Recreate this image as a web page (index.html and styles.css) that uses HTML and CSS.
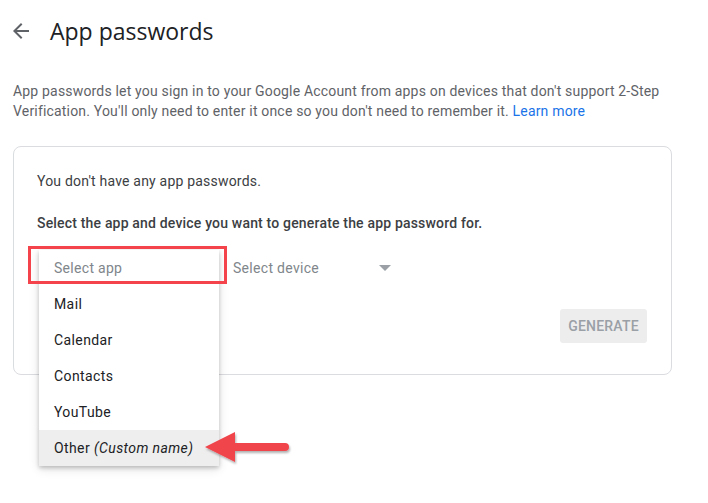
FILE: index.html
```html
<!DOCTYPE html>
<html lang="en">
<head>
<meta charset="utf-8">
<title>App passwords</title>
<link rel="stylesheet" href="styles.css">
</head>
<body>
<div class="page">
  <header class="header">
    <svg class="back" width="24" height="24" viewBox="0 0 24 24" aria-hidden="true">
      <path d="M20 11H7.83l5.59-5.59L12 4l-8 8 8 8 1.41-1.41L7.83 13H20v-2z" fill="#5f6368"/>
    </svg>
    <h1 class="title">App passwords</h1>
  </header>
  <p class="intro">App passwords let you sign in to your Google Account from apps on devices that don't support 2-Step Verification. You'll only need to enter it once so you don't need to remember it. <a class="link" href="#">Learn more</a></p>
  <section class="card">
    <p class="empty">You don't have any app passwords.</p>
    <p class="prompt">Select the app and device you want to generate the app password for.</p>
    <div class="selects">
      <div class="app-select">
        <div class="field"></div>
        <ul class="menu">
          <li class="item placeholder">Select app</li>
          <li class="item">Mail</li>
          <li class="item">Calendar</li>
          <li class="item">Contacts</li>
          <li class="item">YouTube</li>
          <li class="item hover">Other <em>(Custom name)</em></li>
        </ul>
        <div class="highlight"></div>
        <svg class="arrow" width="92" height="36" viewBox="0 0 92 36" aria-hidden="true">
          <defs>
            <filter id="sh" x="-10%" y="-30%" width="130%" height="170%">
              <feDropShadow dx="1" dy="2" stdDeviation="1.2" flood-color="#000" flood-opacity="0.3"/>
            </filter>
          </defs>
          <g filter="url(#sh)" fill="#f0444b">
            <path d="M2 16 L32 1 L32 12 L82 12 Q86 12 86 16 Q86 20 82 20 L32 20 L32 31 Z"/>
          </g>
        </svg>
      </div>
      <div class="device-select">
        <span class="placeholder">Select device</span>
        <span class="caret"></span>
      </div>
    </div>
    <div class="actions">
      <button class="generate" type="button">GENERATE</button>
    </div>
  </section>
</div>
</body>
</html>
```

FILE: styles.css
```css
* { box-sizing: border-box; }

html, body {
  margin: 0;
  padding: 0;
  background: #ffffff;
}

body {
  font-family: Roboto, "Liberation Sans", Arial, sans-serif;
  color: #202124;
  width: 708px;
  height: 503px;
  overflow: hidden;
}

.page {
  padding: 0 30px 0 13px;
}

.header {
  display: flex;
  align-items: center;
  height: 62px;
}

.back {
  margin-left: -4px;
  display: block;
}

.title {
  margin: 0 0 0 17px;
  font-family: "Open Sans", Roboto, sans-serif;
  font-size: 23px;
  font-weight: 400;
  color: #202124;
}

.intro {
  margin: 19px 0 0;
  font-size: 14px;
  line-height: 20px;
  color: #5f6368;
  letter-spacing: 0.18px;
}

.link {
  color: #1a73e8;
  text-decoration: none;
}

.card {
  margin-top: 25px;
  width: 659px;
  height: 229px;
  border: 1px solid #dadce0;
  border-radius: 8px;
  padding: 24px 24px 0 23px;
}

.empty {
  margin: 0;
  font-size: 14px;
  line-height: 20px;
  color: #3c4043;
  letter-spacing: 0.2px;
}

.prompt {
  margin: 22px 0 0;
  font-size: 14px;
  line-height: 20px;
  font-weight: 500;
  color: #3c4043;
  letter-spacing: 0.18px;
}

.selects {
  display: flex;
  align-items: center;
  margin-top: 17px;
  height: 36px;
}

.app-select {
  position: relative;
  width: 180px;
  height: 36px;
  margin-left: 2px;
}

.field {
  height: 36px;
}

.placeholder {
  color: #80868b;
  font-weight: 400;
}

.menu {
  position: absolute;
  top: 0;
  left: 0;
  width: 180px;
  margin: 0;
  padding: 0;
  list-style: none;
  background: #ffffff;
  box-shadow: 0 2px 4px rgba(0,0,0,0.2), 0 3px 10px rgba(0,0,0,0.12);
  z-index: 2;
}

.item {
  height: 36px;
  line-height: 36px;
  padding-left: 15px;
  font-size: 14px;
  font-weight: 400;
  color: #202124;
  letter-spacing: 0.4px;
}

.item.placeholder {
  color: #80868b;
  letter-spacing: 0.3px;
}

.item.hover {
  background: #eeeeee;
}

.item em {
  font-style: italic;
}

.highlight {
  position: absolute;
  left: -11px;
  top: -4px;
  width: 199px;
  height: 38px;
  border: 3px solid #f4434b;
  z-index: 3;
}

.arrow {
  position: absolute;
  left: 164px;
  top: 181px;
  z-index: 3;
}

.device-select {
  display: flex;
  align-items: center;
  width: 158px;
  margin-left: 14px;
  height: 36px;
  font-size: 14px;
  letter-spacing: 0.3px;
}

.device-select .placeholder {
  flex: 1;
}

.caret {
  width: 0;
  height: 0;
  border-left: 6px solid transparent;
  border-right: 6px solid transparent;
  border-top: 6px solid #9aa0a6;
}

.actions {
  display: flex;
  justify-content: flex-end;
  margin-top: 23px;
}

.generate {
  width: 87px;
  height: 34px;
  border: none;
  border-radius: 3px;
  background: #ededed;
  color: #9aa0a6;
  font-family: Roboto, "Liberation Sans", Arial, sans-serif;
  font-size: 14px;
  font-weight: 500;
  letter-spacing: 0.2px;
  padding: 0;
}
```
